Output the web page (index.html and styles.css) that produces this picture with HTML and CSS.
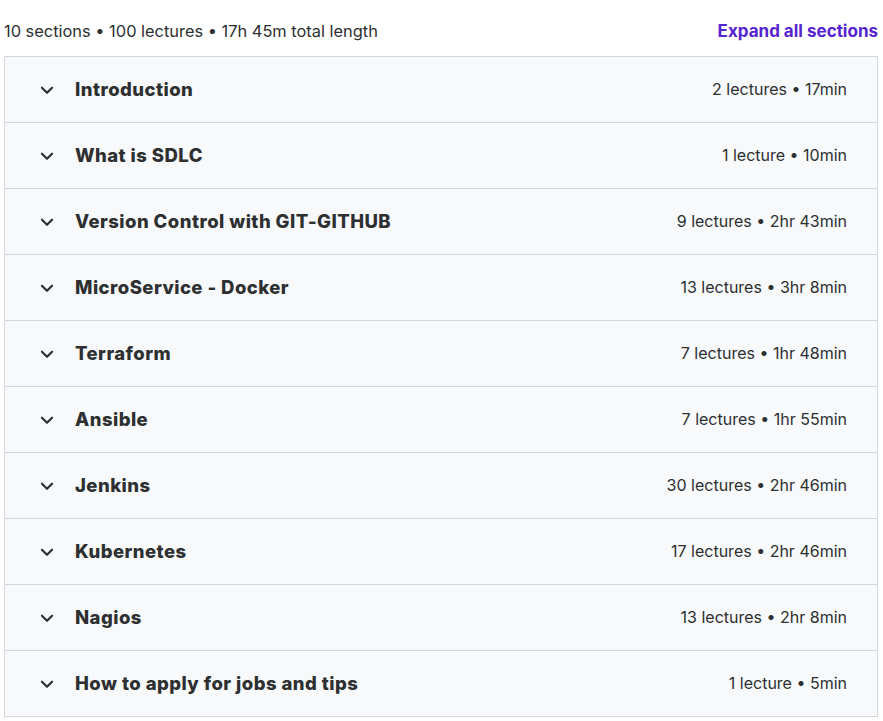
FILE: index.html
```html
<!DOCTYPE html>
<html lang="en">
<head>
<meta charset="utf-8">
<title>Course content</title>
<link rel="stylesheet" href="styles.css">
</head>
<body>
<div class="curriculum">
  <div class="summary">
    <span class="stats">10 sections • 100 lectures • 17h 45m total length</span>
    <button class="expand-all">Expand all sections</button>
  </div>
  <div class="sections">
    <div class="section">
      <svg class="chevron" viewBox="0 0 24 24"><path d="M6.5 9.5 12 15l5.5-5.5"/></svg>
      <span class="title">Introduction</span>
      <span class="meta">2 lectures • 17min</span>
    </div>
    <div class="section">
      <svg class="chevron" viewBox="0 0 24 24"><path d="M6.5 9.5 12 15l5.5-5.5"/></svg>
      <span class="title">What is SDLC</span>
      <span class="meta">1 lecture • 10min</span>
    </div>
    <div class="section">
      <svg class="chevron" viewBox="0 0 24 24"><path d="M6.5 9.5 12 15l5.5-5.5"/></svg>
      <span class="title">Version Control with GIT-GITHUB</span>
      <span class="meta">9 lectures • 2hr 43min</span>
    </div>
    <div class="section">
      <svg class="chevron" viewBox="0 0 24 24"><path d="M6.5 9.5 12 15l5.5-5.5"/></svg>
      <span class="title">MicroService - Docker</span>
      <span class="meta">13 lectures • 3hr 8min</span>
    </div>
    <div class="section">
      <svg class="chevron" viewBox="0 0 24 24"><path d="M6.5 9.5 12 15l5.5-5.5"/></svg>
      <span class="title">Terraform</span>
      <span class="meta">7 lectures • 1hr 48min</span>
    </div>
    <div class="section">
      <svg class="chevron" viewBox="0 0 24 24"><path d="M6.5 9.5 12 15l5.5-5.5"/></svg>
      <span class="title">Ansible</span>
      <span class="meta">7 lectures • 1hr 55min</span>
    </div>
    <div class="section">
      <svg class="chevron" viewBox="0 0 24 24"><path d="M6.5 9.5 12 15l5.5-5.5"/></svg>
      <span class="title">Jenkins</span>
      <span class="meta">30 lectures • 2hr 46min</span>
    </div>
    <div class="section">
      <svg class="chevron" viewBox="0 0 24 24"><path d="M6.5 9.5 12 15l5.5-5.5"/></svg>
      <span class="title">Kubernetes</span>
      <span class="meta">17 lectures • 2hr 46min</span>
    </div>
    <div class="section">
      <svg class="chevron" viewBox="0 0 24 24"><path d="M6.5 9.5 12 15l5.5-5.5"/></svg>
      <span class="title">Nagios</span>
      <span class="meta">13 lectures • 2hr 8min</span>
    </div>
    <div class="section">
      <svg class="chevron" viewBox="0 0 24 24"><path d="M6.5 9.5 12 15l5.5-5.5"/></svg>
      <span class="title">How to apply for jobs and tips</span>
      <span class="meta">1 lecture • 5min</span>
    </div>
  </div>
</div>
</body>
</html>
```
FILE: styles.css
```css
html, body {
  margin: 0;
  background: #ffffff;
}

body {
  padding: 0 5px 0 4px;
  font-family: Inter, "Noto Sans", sans-serif;
  color: #2d2f31;
}

.summary {
  height: 56px;
  display: flex;
  align-items: center;
  justify-content: space-between;
  padding-top: 6px;
  box-sizing: border-box;
}

.stats {
  font-size: 16.4px;
  color: #2d2f31;
}

.expand-all {
  border: 0;
  background: none;
  padding: 0;
  font-family: inherit;
  font-size: 17px;
  font-weight: 700;
  color: #5624d0;
  cursor: pointer;
}

.sections {
  border: 1px solid #d1d7dc;
  border-bottom: 0;
}

.section {
  height: 66px;
  box-sizing: border-box;
  display: flex;
  align-items: center;
  padding: 0 30px 0 31px;
  background: #f7f9fa;
  border-bottom: 1px solid #d1d7dc;
}

.chevron {
  width: 22px;
  height: 22px;
  fill: none;
  stroke: #2d2f31;
  stroke-width: 2.4;
  stroke-linecap: round;
  stroke-linejoin: round;
  flex: none;
}

.title {
  margin-left: 17px;
  margin-top: -1px;
  font-size: 18.5px;
  font-weight: 800;
  letter-spacing: 0.45px;
  flex: 1;
}

.meta {
  margin-top: -1px;
  font-size: 16px;
  color: #2d2f31;
}
```
